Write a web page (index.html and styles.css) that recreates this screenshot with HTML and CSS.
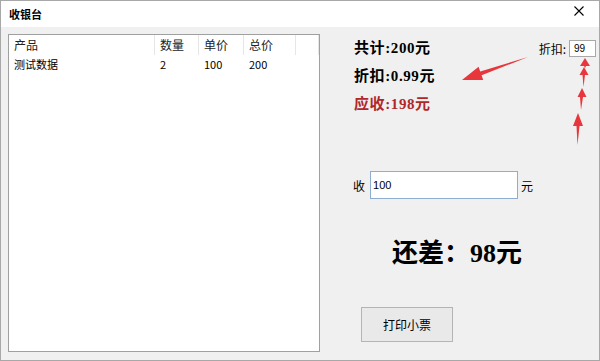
FILE: index.html
```html
<!DOCTYPE html>
<html lang="zh-CN">
<head>
    <meta charset="UTF-8">
    <title>收银台</title>
    <link rel="stylesheet" href="styles.css">
</head>
<body>

<div class="window">
    <div class="titlebar">
        <span class="title">收银台</span>
        <span class="close">
            <svg width="10" height="10" viewBox="0 0 10 10"><path d="M0.5 0.5 L9.5 9.5 M9.5 0.5 L0.5 9.5" stroke="#000" stroke-width="1.1" fill="none"/></svg>
        </span>
    </div>

    <div class="content">
        <!-- 商品列表 -->
        <div class="list">
            <div class="list-row list-head">
                <span>产品</span>
                <span>数量</span>
                <span>单价</span>
                <span>总价</span>
                <span></span>
            </div>
            <div class="list-row">
                <span>测试数据</span>
                <span>2</span>
                <span>100</span>
                <span>200</span>
                <span></span>
            </div>
        </div>

        <!-- 结算区 -->
        <div class="checkout">
            <div class="summary-row">
                <div class="summary">
                    <div class="sum-line">共计:200元</div>
                    <div class="sum-line">折扣:0.99元</div>
                    <div class="sum-line due">应收:198元</div>
                </div>
                <div class="discount">
                    <label for="discount">折扣:</label>
                    <input type="text" id="discount" value="99">
                </div>
            </div>

            <div class="pay-row">
                <label for="paid">收</label>
                <input type="text" id="paid" value="100">
                <span>元</span>
            </div>

            <div class="owe">还差：98元</div>

            <button class="print-btn">打印小票</button>
        </div>
    </div>

    <!-- 标注箭头 -->
    <svg class="marks" width="600" height="361" viewBox="0 0 600 361">
        <polygon points="528,57 480.2,71.5 478.6,66.8 462,80 483.2,80 481.6,75.3" fill="#e8373c"/>
        <polygon points="585,58 590,66 586,66 585,68 584,66 580,66" fill="#e8373c"/>
        <polygon points="584,67 588.5,75 585,75 583.5,87 582.5,75 579.5,75" fill="#e8373c"/>
        <polygon points="582,88 586.5,97 583,97 581,110 580,97 577.5,97" fill="#e8373c"/>
        <polygon points="578,113 583,126 579.5,126 577.5,145 576.5,126 573,126" fill="#e8373c"/>
    </svg>
</div>

</body>
</html>
```

FILE: styles.css
```css
body {
    margin: 0;
    font-family: "Noto Sans CJK SC", sans-serif;
    font-size: 12px;
    color: #000;
    background-color: #fff;
}
.window {
    position: relative;
    width: 600px;
    height: 361px;
    box-sizing: border-box;
    border: 1px solid #a8a8a8;
    background-color: #f0f0f0;
    display: flex;
    flex-direction: column;
}
.titlebar {
    height: 26px;
    background-color: #fff;
    display: flex;
    align-items: center;
    justify-content: space-between;
    padding: 0 15px 0 8px;
}
.title {
    font-weight: bold;
    font-size: 11px;
}
.close {
    display: flex;
    margin-top: -6px;
}
.content {
    flex: 1;
    display: flex;
    padding: 7px 0 8px 7px;
}
.list {
    width: 312px;
    box-sizing: border-box;
    border: 1px solid #a0a0a0;
    background-color: #fff;
}
.list-row {
    display: grid;
    grid-template-columns: 146px 44px 45px 52px 1fr;
    height: 18px;
    line-height: 18px;
    font-size: 11px;
}
.list-row span {
    padding-left: 5px;
}
.list-head {
    height: 20px;
    line-height: 20px;
    font-size: 12px;
    color: #222;
}
.list-head span {
    border-right: 1px solid #e6e6e6;
}
.checkout {
    flex: 1;
    display: flex;
    flex-direction: column;
    align-items: flex-start;
    padding: 0 3px 0 34px;
}
.summary-row {
    align-self: stretch;
    display: flex;
    justify-content: space-between;
    align-items: flex-start;
}
.sum-line {
    font-family: "Liberation Serif", "Noto Sans CJK SC", serif;
    font-weight: bold;
    font-size: 15px;
    line-height: 28px;
    letter-spacing: 0.6px;
}
.due {
    color: #b0272a;
}
.discount {
    display: flex;
    align-items: center;
    gap: 3px;
    margin-top: 6px;
}
.discount input {
    width: 27px;
    height: 17px;
    box-sizing: border-box;
    border: 1px solid #a8a8a8;
    padding: 0 0 0 4px;
    font-size: 10px;
    font-family: "Liberation Sans", sans-serif;
}
.pay-row {
    display: flex;
    align-items: center;
    margin: 53px 0 0 -1px;
    font-size: 12px;
}
.pay-row input {
    width: 148px;
    height: 28px;
    box-sizing: border-box;
    margin: 0 3px 0 5px;
    border: 1px solid #8fadd0;
    padding: 0 2px;
    font-size: 11px;
    font-family: "Liberation Sans", sans-serif;
}
.owe {
    margin: 40px 0 0 38px;
    font-family: "Liberation Serif", "Noto Sans CJK SC", serif;
    font-weight: bold;
    font-size: 26px;
    line-height: 30px;
}
.print-btn {
    margin: 38px 0 0 7px;
    width: 92px;
    height: 35px;
    border: 1px solid #b4b4b4;
    background-color: #e9e9e9;
    font-family: "Noto Sans CJK SC", sans-serif;
    font-size: 12px;
    color: #000;
}
.marks {
    position: absolute;
    left: -1px;
    top: -1px;
    pointer-events: none;
}
```
